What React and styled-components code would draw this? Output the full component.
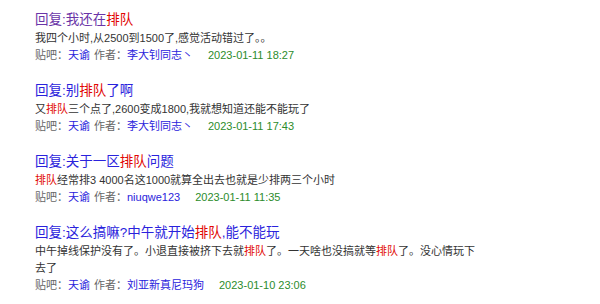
import React from "react";
import styled, { createGlobalStyle } from "styled-components";

const Global = createGlobalStyle`
  html, body { margin: 0; padding: 0; background: #fff; }
  body { font-family: "Liberation Sans", "Noto Sans CJK SC", sans-serif; }
`;

const List = styled.div`
  display: flex;
  flex-direction: column;
  gap: 17px;
  padding: 10px 0 0 35px;
`;

const Item = styled.div`
  display: flex;
  flex-direction: column;
`;

const Title = styled.a`
  font-size: 13.5px;
  line-height: 20px;
  color: ${(p) => (p.$visited ? "#6a35a8" : "#2a22dc")};
  text-decoration: none;
  white-space: nowrap;
`;

const Hl = styled.em`
  font-style: normal;
  color: #e10602;
`;

const Content = styled.div`
  font-size: 11px;
  line-height: 17px;
  color: #333;
  width: 446px;
`;

const Meta = styled.div`
  font-size: 11px;
  line-height: 17px;
  color: #666;
  white-space: nowrap;
`;

const MetaLink = styled.a`
  color: #2a22dc;
  text-decoration: none;
  margin-right: ${(p) => p.$mr || 0}px;
`;

const DateText = styled.span`
  color: #2c8c2c;
  margin-left: 15px;
`;

const hl = (s) =>
  s.split(/(排队)/).map((part, i) =>
    part === "排队" ? <Hl key={i}>{part}</Hl> : <React.Fragment key={i}>{part}</React.Fragment>
  );

const data = [
  {
    visited: true,
    title: "我还在排队",
    content: "我四个小时,从2500到1500了,感觉活动错过了。。",
    author: "李大钊同志丶",
    date: "2023-01-11 18:27",
  },
  {
    title: "别排队了啊",
    content: "又排队三个点了,2600变成1800,我就想知道还能不能玩了",
    author: "李大钊同志丶",
    date: "2023-01-11 17:43",
  },
  {
    title: "关于一区排队问题",
    content: "排队经常排3 4000名这1000就算全出去也就是少排两三个小时",
    author: "niuqwe123",
    date: "2023-01-11 11:35",
  },
  {
    title: "这么搞嘛?中午就开始排队,能不能玩",
    content:
      "中午掉线保护没有了。小退直接被挤下去就排队了。一天啥也没搞就等排队了。没心情玩下去了",
    author: "刘亚新真尼玛狗",
    date: "2023-01-10 23:06",
  },
];

export default function App() {
  return (
    <>
      <Global />
      <List>
        {data.map((d, i) => (
          <Item key={i}>
            <Title href="#" $visited={d.visited}>
              回复:{hl(d.title)}
            </Title>
            <Content>{hl(d.content)}</Content>
            <Meta>
              贴吧：<MetaLink href="#" $mr={4}>天谕</MetaLink>作者：
              <MetaLink href="#">{d.author}</MetaLink>
              <DateText>{d.date}</DateText>
            </Meta>
          </Item>
        ))}
      </List>
    </>
  );
}
